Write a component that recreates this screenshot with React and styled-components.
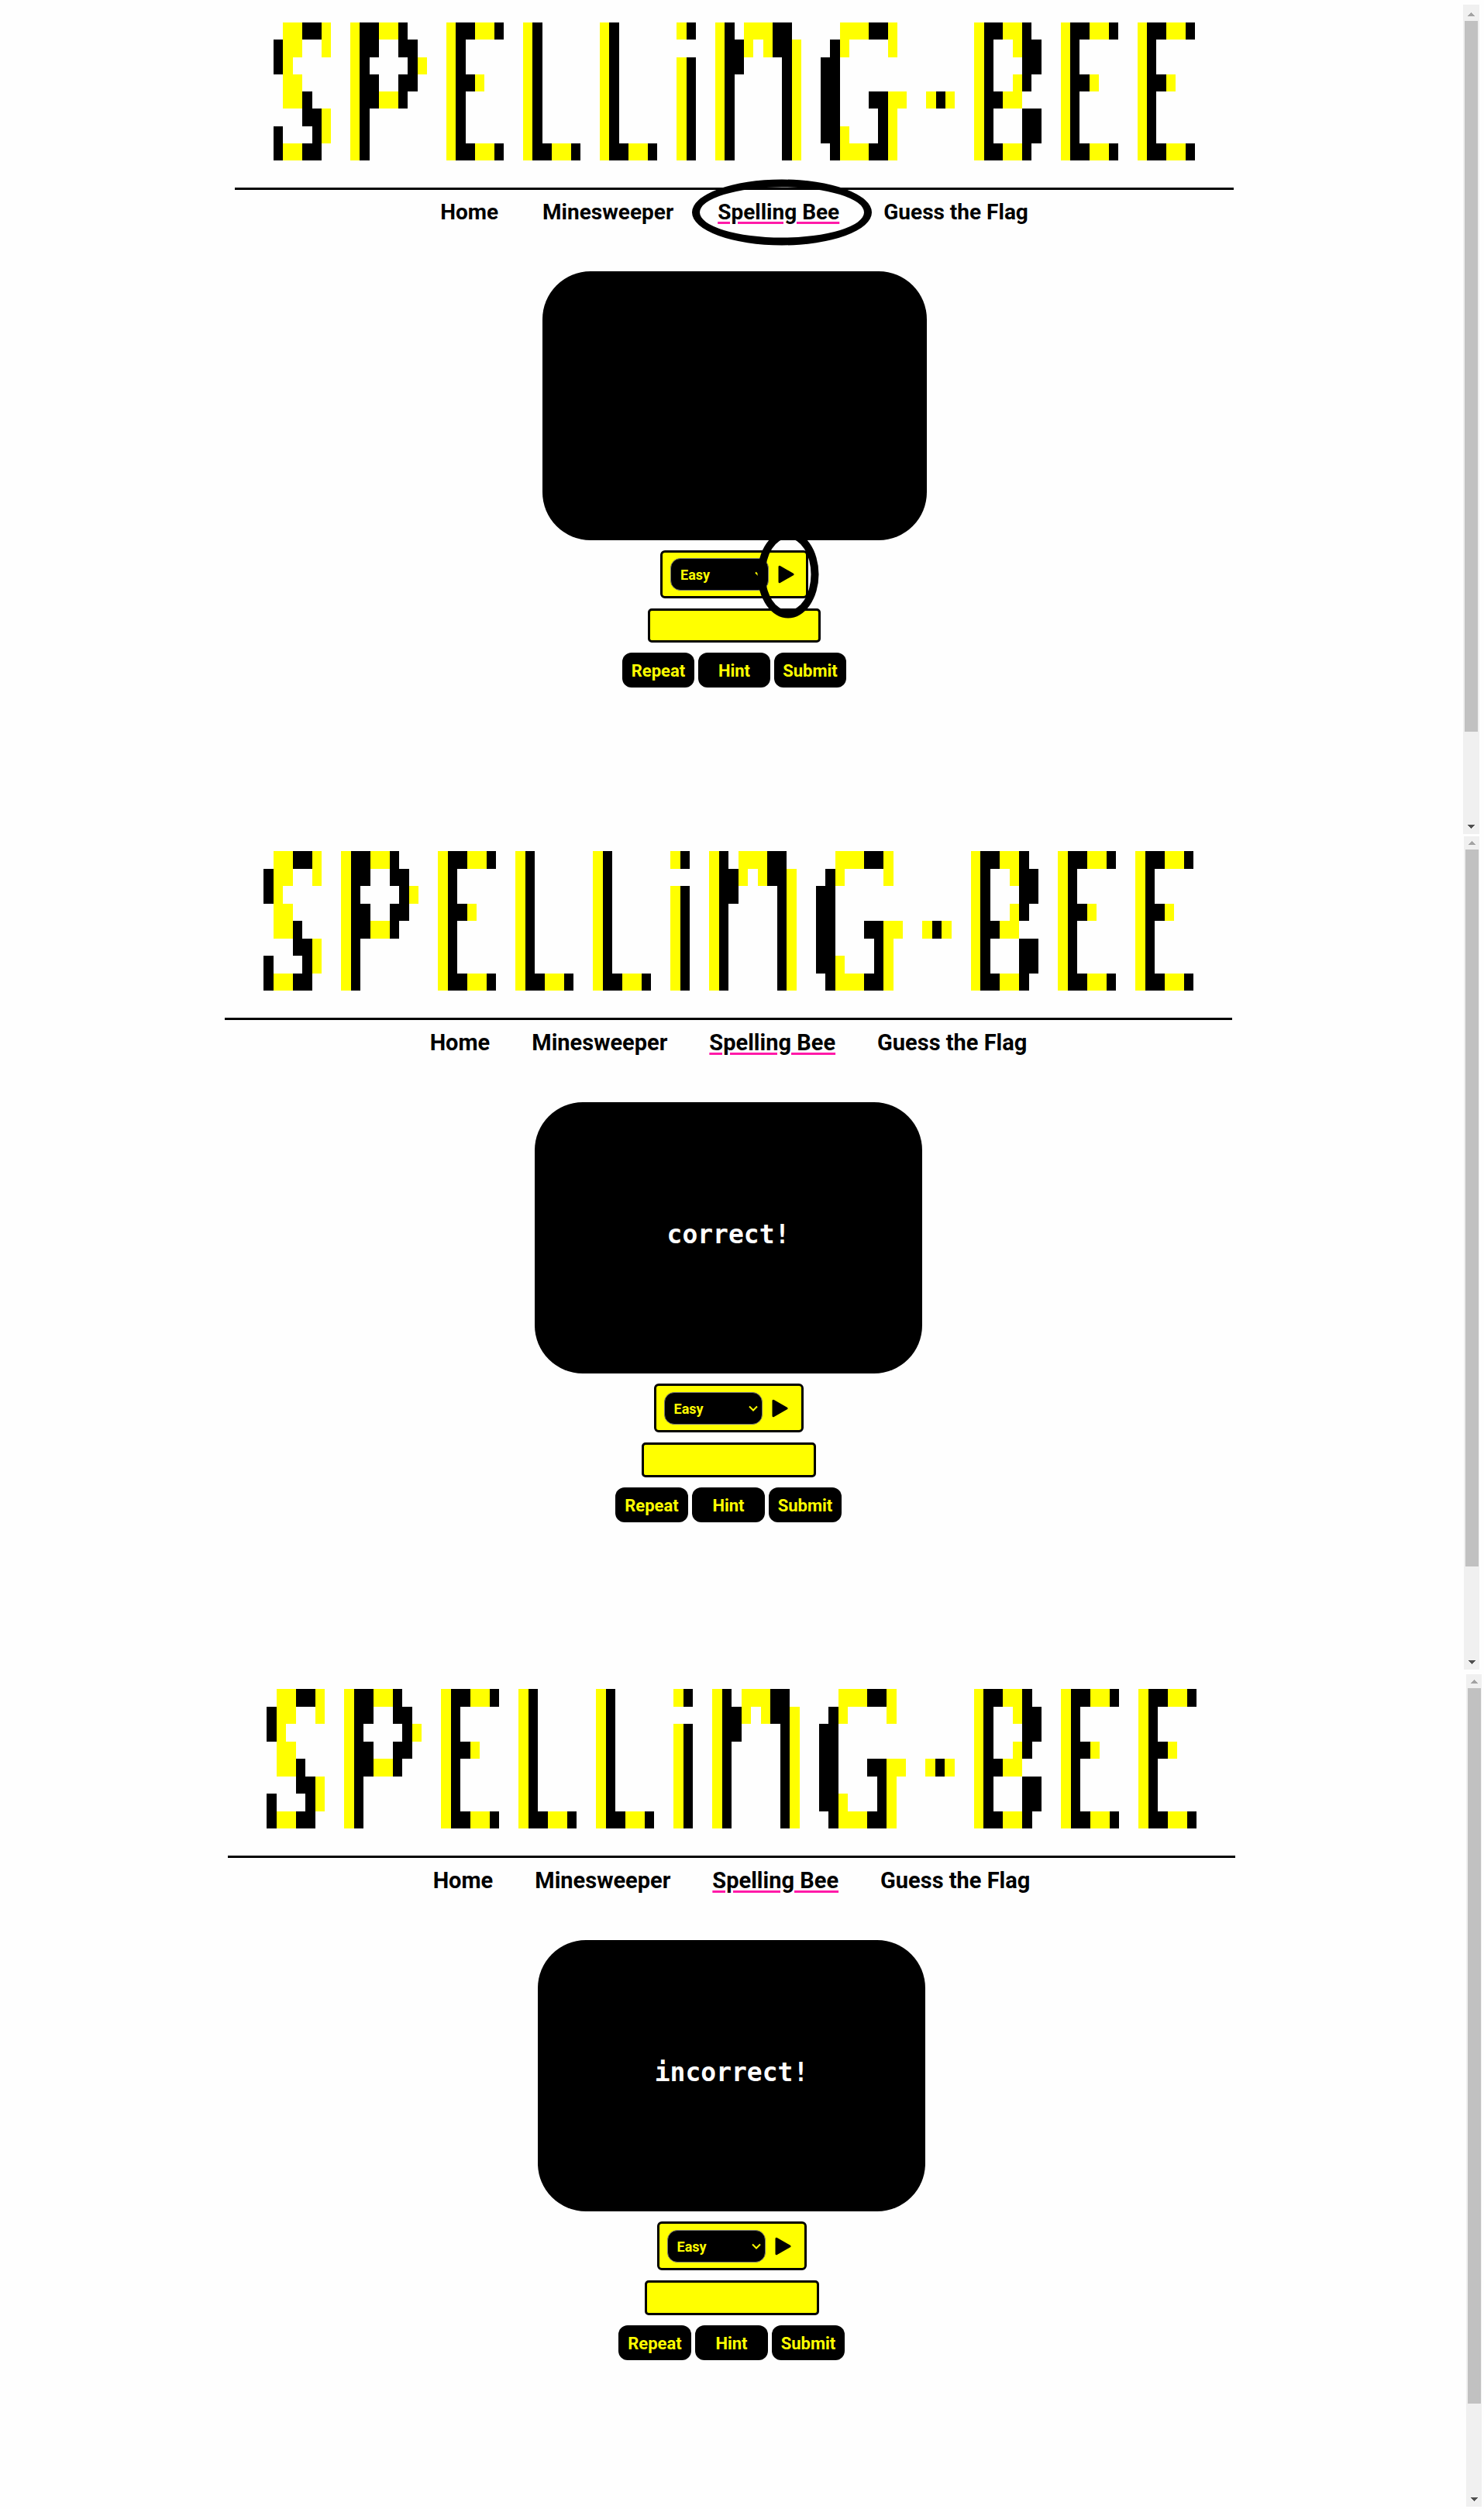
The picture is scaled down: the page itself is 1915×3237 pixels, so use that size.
import React from "react";
import styled, { createGlobalStyle, css } from "styled-components";

const INK = "#000000";
const YELLOW = "#ffff00";
const PINK = "#ff1aa8";
const SANS = `Roboto, "Liberation Sans", sans-serif`;

const GlobalStyle = createGlobalStyle`
  *, *::before, *::after { box-sizing: border-box; }
  body { margin: 0; background: #fefefe; color: ${INK}; font-family: ${SANS}; }
`;

/* Two-tone bitmap letters: Y = yellow, B = black, anything else is empty. */
const E = ["YBBYYB", "YB....", "YB....", "YBBY..", "YB....", "YB....", "YB....", "YBBYYB"];
const L = ["YB....", "YB....", "YB....", "YB....", "YB....", "YB....", "YB....", "YBBYYB"];
const LETTERS = {
  S: [".YYBBY", "BYY..Y", "BY....", ".YY...", ".YYB..", "...BBY", "B...BY", "BYYBB."],
  P: ["YBBYYB..", "YBB..BB.", "YB....BY", "YBB..BB.", "YBBYYB..", "YB......", "YB......", "YB......"],
  E,
  L,
  i: ["YB", "..", "YB", "YB", "YB", "YB", "YB", "YB"],
  N: [
    "YB.YYYBB.", "YBBY.YBBY", "YBB....BY", "YB.....BY",
    "YB.....BY", "YB.....BY", "YB.....BY", "YB.....BY",
  ],
  G: [
    "..YYYBBY.", ".BY....Y.", "BB.......", "BB.......",
    "BB...BBYY", "BB....BY.", "BBY...BY.", ".BYYYBBY.",
  ],
  "-": ["...", "...", "...", "...", "YBY", "...", "...", "..."],
  B: ["YBBYYB.", "YB..YBB", "YB...BB", "YB..YB.", "YBBYY..", "YB...BB", "YB...BB", "YBBYYB."],
};

const BANNER = "SPELLiNG-BEE";
const BANNER_ROWS = Array.from({ length: 8 }, (_, r) =>
  [...BANNER].map((ch) => LETTERS[ch][r]).join("..")
);
const RUNS = BANNER_ROWS.flatMap((row, r) =>
  [...row.matchAll(/Y+|B+/g)].map((m) => ({
    row: r + 1,
    col: m.index + 1,
    span: m[0].length,
    ink: m[0][0] === "B",
  }))
);

const Page = styled.div`
  display: flex;
  flex-direction: column;
  padding: 6px 0 3px;
`;

const Screen = styled.section`
  display: flex;
  padding-right: ${(p) => p.$edge}px;
  margin-bottom: ${(p) => p.$after}px;
`;

const Content = styled.main`
  flex: 1;
  min-width: 0;
  display: flex;
  flex-direction: column;
  align-items: center;
  padding: ${(p) => p.$pad};
`;

const Header = styled.header`
  width: 100%;
  max-width: ${(p) => (p.$small ? 1289 : 1300)}px;
`;

const Banner = styled.h1`
  display: grid;
  grid-template-columns: repeat(96, 1fr);
  grid-template-rows: repeat(8, 1fr);
  height: ${(p) => (p.$small ? 178 : 180)}px;
  margin: 0 50px 35px;
`;

const Block = styled.span`
  background: ${(p) => (p.$ink ? INK : YELLOW)};
`;

const Nav = styled.nav`
  display: flex;
  justify-content: center;
  gap: ${(p) => (p.$small ? 57 : 54)}px;
  border-top: 3px solid ${INK};
  padding-top: 11px;
  margin-bottom: ${(p) => (p.$small ? 58 : 59)}px;
  font-size: ${(p) => (p.$small ? 28 : 29)}px;
`;

const NavLink = styled.a`
  position: relative;
  color: ${INK};
  line-height: 36px;
  font-weight: 700;
  white-space: nowrap;
  text-decoration: none;
  ${(p) =>
    p.$active &&
    css`
      text-decoration: underline ${PINK} 3px;
      text-underline-offset: 3px;
    `}
`;

const Ring = styled.span`
  position: absolute;
  top: 50%;
  left: ${(p) => p.$left};
  width: ${(p) => p.$w}px;
  height: ${(p) => p.$h}px;
  transform: translate(-50%, -50%);
  border: 10px solid ${INK};
  border-radius: 50%;
  pointer-events: none;
  z-index: 1;
`;

const Monitor = styled.div`
  display: flex;
  align-items: center;
  justify-content: center;
  width: 100%;
  max-width: ${(p) => (p.$small ? 496 : 500)}px;
  height: ${(p) => (p.$small ? 347 : 350)}px;
  padding-bottom: 8px;
  border-radius: 62px;
  background: ${INK};
  color: #ffffff;
  font: 700 33px/36px "DejaVu Sans Mono", "Liberation Mono", monospace;
`;

const Form = styled.form`
  display: flex;
  flex-direction: column;
  align-items: center;
  gap: 13px;
  margin-top: 13px;
`;

const Starter = styled.div`
  display: flex;
  align-items: center;
  gap: 12px;
  width: ${(p) => (p.$small ? 191 : 193)}px;
  height: ${(p) => (p.$small ? 62 : 63)}px;
  padding: 0 10px;
  border: 3px solid ${INK};
  border-radius: 6px;
  background: ${YELLOW};
`;

const SelectWrap = styled.div`
  position: relative;
  display: flex;
  color: ${YELLOW};
  svg {
    position: absolute;
    right: 6px;
    top: 17px;
    pointer-events: none;
  }
`;

const Select = styled.select`
  appearance: none;
  width: 127px;
  height: 42px;
  padding: 2px 12px 0;
  border: 1px solid #767676;
  border-radius: 13px;
  background: ${INK};
  color: ${YELLOW};
  font: 700 18px/24px ${SANS};
`;

const PlayButton = styled.button`
  position: relative;
  display: flex;
  padding: 0;
  border: 0;
  background: none;
  color: ${INK};
`;

const Answer = styled.input`
  width: ${(p) => (p.$small ? 223 : 225)}px;
  height: ${(p) => (p.$small ? 44 : 45)}px;
  padding: 0 12px;
  border: 3px solid ${INK};
  border-radius: 5px;
  background: ${YELLOW};
  font: 700 22px/30px ${SANS};
`;

const Actions = styled.div`
  display: grid;
  grid-template-columns: repeat(3, ${(p) => (p.$small ? 93 : 94)}px);
  gap: 5px;
`;

const Action = styled.button`
  height: 45px;
  padding: 2px 0 0;
  border: 0;
  border-radius: 12px;
  background: ${INK};
  color: ${YELLOW};
  font: 700 22px/30px ${SANS};
`;

const Track = styled.div`
  display: flex;
  flex-direction: column;
  align-items: center;
  width: ${(p) => p.$width}px;
  padding-top: ${(p) => p.$top}px;
  background: #f0f0f0;
`;

const Thumb = styled.div`
  width: 17px;
  height: 86%;
  background: #c1c1c1;
`;

const Arrow = styled.svg`
  flex: none;
  display: block;
  width: 17px;
  height: 17px;
  fill: ${(p) => (p.$down ? "#505050" : "#a3a3a3")};
  margin-top: ${(p) => (p.$down ? "auto" : "0")};
`;

function Scrollbar({ width, top }) {
  return (
    <Track $width={width} $top={top} aria-hidden="true">
      <Arrow viewBox="0 0 17 17" shapeRendering="crispEdges">
        <path d="M8 6h1v1h1v1h1v1h1v1h1v1H4v-1h1V9h1V8h1V7h1z" />
      </Arrow>
      <Thumb />
      <Arrow $down viewBox="0 0 17 17" shapeRendering="crispEdges">
        <path d="M4 5h9v1h-1v1h-1v1h-1v1H9v1H8V9H7V8H6V7H5V6H4z" />
      </Arrow>
    </Track>
  );
}

const LINKS = ["Home", "Minesweeper", "Spelling Bee", "Guess the Flag"];

function Game({ id, message, small, marked, edge, after, pad, bar }) {
  return (
    <Screen $edge={edge} $after={after}>
      <Content $pad={pad}>
        <Header $small={small}>
          <Banner $small={small} aria-label={BANNER}>
            {RUNS.map(({ row, col, span, ink }) => (
              <Block
                key={`${row}-${col}`}
                $ink={ink}
                style={{ gridArea: `${row} / ${col} / auto / span ${span}` }}
              />
            ))}
          </Banner>
          <Nav $small={small}>
            {LINKS.map((name) => (
              <NavLink key={name} href="#" $active={name === "Spelling Bee"}>
                {name}
                {marked && name === "Spelling Bee" && (
                  <Ring $w={232} $h={85} $left="calc(50% + 4px)" />
                )}
              </NavLink>
            ))}
          </Nav>
        </Header>
        <Monitor $small={small}>{message}</Monitor>
        <Form onSubmit={(e) => e.preventDefault()}>
          <Starter $small={small}>
            <SelectWrap>
              <Select id={`${id}-level`} aria-label="Difficulty" defaultValue="Easy">
                <option>Easy</option>
              </Select>
              <svg width="12" height="9" viewBox="0 0 12 9" fill="none" stroke="currentColor" strokeWidth="2">
                <path d="M1 1.5 6 6.5 11 1.5" />
              </svg>
            </SelectWrap>
            <PlayButton type="button" aria-label="Play">
              <svg width="21" height="24" viewBox="0 0 21 24" fill="currentColor" stroke="currentColor" strokeWidth="3" strokeLinejoin="round">
                <path d="M2 2.2v19.6L19 12z" />
              </svg>
              {marked && <Ring $w={79} $h={113} $left="13px" />}
            </PlayButton>
          </Starter>
          <Answer $small={small} id={`${id}-answer`} type="text" aria-label="Answer" />
          <Actions $small={small}>
            <Action type="button">Repeat</Action>
            <Action type="button">Hint</Action>
            <Action type="submit">Submit</Action>
          </Actions>
        </Form>
      </Content>
      <Scrollbar {...bar} />
    </Screen>
  );
}

export default function App() {
  return (
    <>
      <GlobalStyle />
      <Page>
        <Game id="start" small marked edge={6} after={3} pad="23px 0 189px 7px" bar={{ width: 21, top: 4 }} />
        <Game id="right" message="correct!" edge={6} after={6} pad="19px 9px 190px 0" bar={{ width: 20, top: 0 }} />
        <Game id="wrong" message="incorrect!" edge={3} after={0} pad="19px 4px 189px 0" bar={{ width: 20, top: 1 }} />
      </Page>
    </>
  );
}
